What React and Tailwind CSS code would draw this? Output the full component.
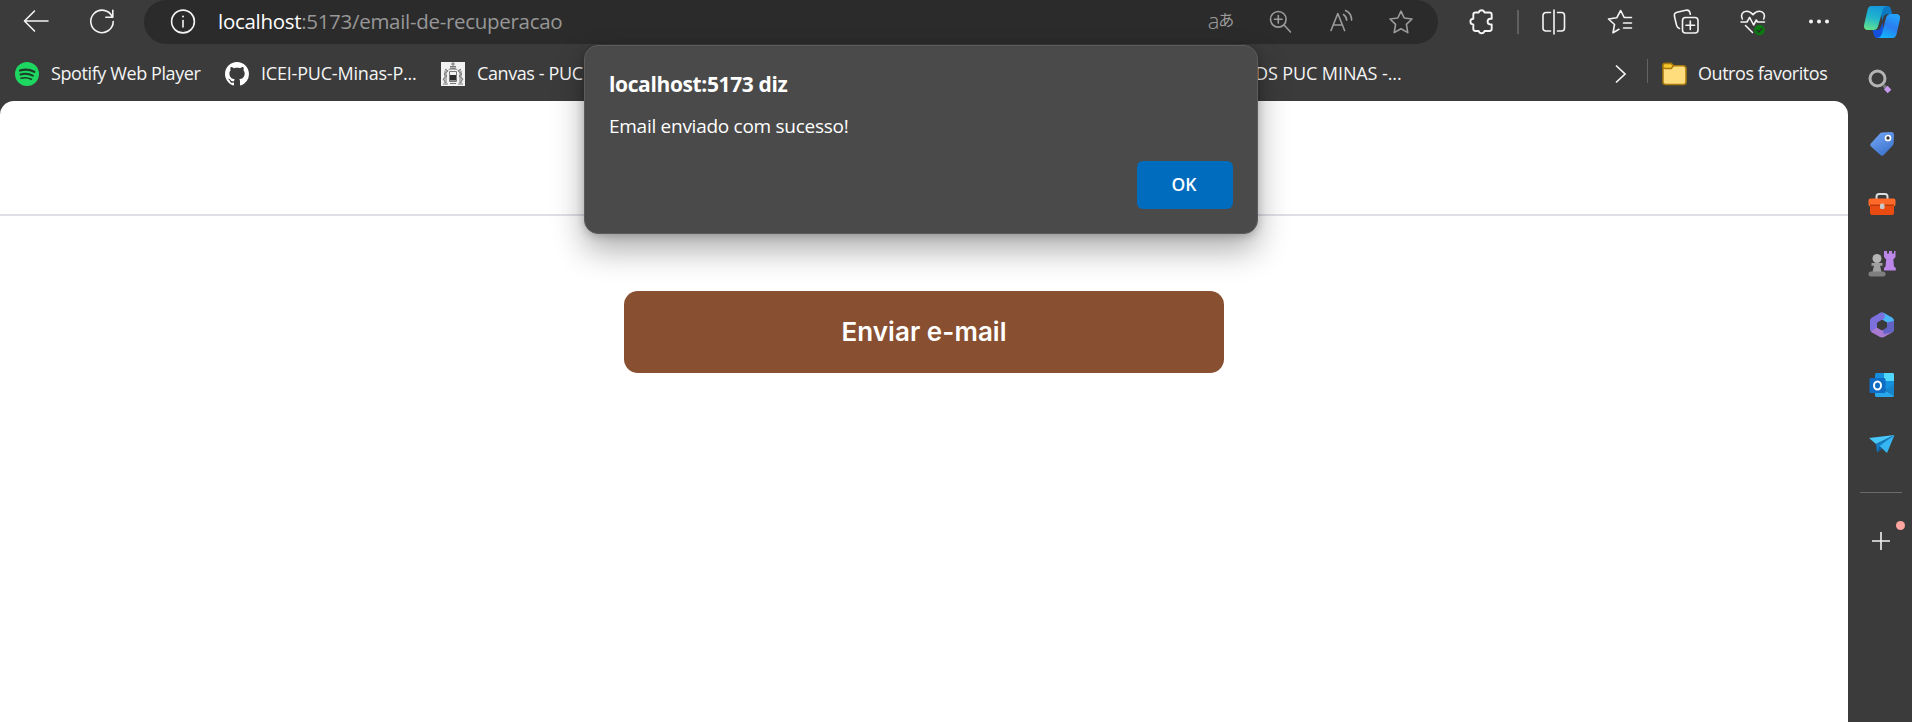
const SEGOE = "font-['Open_Sans','Noto_Sans',sans-serif]";

function Icon({ w = 28, h = 28, className = "", children }) {
  return (
    <svg
      width={w}
      height={h}
      viewBox={`0 0 ${w} ${h}`}
      fill="none"
      stroke="currentColor"
      strokeWidth="1.6"
      strokeLinecap="round"
      strokeLinejoin="round"
      className={`block shrink-0 ${className}`}
    >
      {children}
    </svg>
  );
}

const STAR = "M14 3.2 L17.2 10 L25 11 L19.4 16.4 L20.8 24.6 L14 20.8 L7.2 24.6 L8.6 16.4 L3 11 L10.8 10 Z";

function Toolbar() {
  return (
    <div className="flex h-11 items-center text-[#f4f4f4]">
      <Icon className="ml-[22px]">
        <path d="M26 13H3M12.5 3L2.500 13l10 10" />
      </Icon>
      <Icon className="ml-[38px]">
        <path d="M24.3 9A11.2 11.2 0 1 0 25.2 13.5M24.8 2.3v7h-7" />
      </Icon>
      <div className="ml-7 flex h-11 w-[1294px] shrink-0 items-center rounded-full bg-[#2b2b2b]">
        <Icon className="ml-[25px]">
          <circle cx="14" cy="13.5" r="11.4" />
          <path d="M14 12.5v6.5" />
          <circle cx="14" cy="8.6" r="1" fill="currentColor" stroke="none" />
        </Icon>
        <span className={`ml-[21px] w-[350px] whitespace-nowrap pb-px text-[20.5px] tracking-[-0.3px] text-[#979797] ${SEGOE}`}>
          <span className="text-white">localhost</span>:5173/email-de-recuperacao
        </span>
        <div className="ml-auto flex items-center pr-[23px] text-[#9b9b9b]">
          <span className="flex w-7 items-center justify-center whitespace-nowrap pb-1 font-['Open_Sans','Noto_Sans_CJK_JP',sans-serif] text-[22px] leading-none font-light">
            a<span className="-ml-px text-[16px] font-normal">あ</span>
          </span>
          <Icon className="ml-[31px]">
            <circle cx="12.3" cy="11.3" r="7.8" />
            <path d="M18 17l6.5 7M12.3 7.5v7.6M8.5 11.3h7.6" />
          </Icon>
          <Icon className="ml-[34px]">
            <path d="M3 22.5L9.8 5.5l6.8 17M5.4 17h8.8M15.5 6.5c2 1.3 3 3 3.2 5.8M17.6 2.5c4 1.8 6 5 6 9.6" />
          </Icon>
          <Icon className="ml-[31px]">
            <path d={STAR} />
          </Icon>
        </div>
      </div>
      <Icon className="ml-[30px]">
        <path d="M7.500 4.500h3.200a3 3 0 0 1 5.800 0h5a2.200 2.200 0 0 1 2.200 2.200v4h-1.200a2.900 2.900 0 0 0 0 5.800h1.200v4.300a2.200 2.200 0 0 1-2.200 2.200h-5a3 3 0 0 1-5.800 0H7.500a2.200 2.200 0 0 1-2.200-2.200v-4.300a2.900 2.900 0 0 1 0-5.800v-4a2.200 2.200 0 0 1 2.200-2.200z" strokeWidth="1.9" />
      </Icon>
      <div className="ml-[21px] h-6 w-0.5 bg-[#606060]" />
      <Icon className="ml-[21px]">
        <path d="M10.500 4.500H6a3 3 0 0 0-3 3V20a3 3 0 0 0 3 3h4.500M17.500 4.500h4a3 3 0 0 1 3 3V20a3 3 0 0 1-3 3h-4M14 2v24" />
      </Icon>
      <Icon className="ml-[38px]">
        <path d="M25.500 9.500h-7.300L14.700 2.500l-4 7.300-8.200 1.200 6 5.500L7 24.800l6-3.500M17.500 15h8M17.500 20h8" />
      </Icon>
      <Icon className="ml-[38px]">
        <rect x="10.500" y="9.500" width="15.500" height="15.500" rx="3" />
        <path d="M18.300 13v8.500M14 17.200h8.600M7.500 20.500c-2-.5-2.600-1.500-3-3.300L2.500 8.500C2 6.200 3 4.800 5 4.300l8.800-2.100c2.400-.5 3.700.6 4.200 2.600l.3 1.500" />
      </Icon>
      <Icon className="ml-[39px]">
        <path d="M3.300 11C1.200 7 3.500 3.300 7.600 3.300c3 0 4.800 1.500 6.400 3.400 1.600-1.900 3.400-3.400 6.400-3.400 4.100 0 6.400 3.700 4.300 7.700M2 14h6l2.600-4.600 4 7.600 2.700-5 1.200 2h7M6.500 17.500l7 7" />
        <circle cx="20.500" cy="22" r="5.300" fill="#0a7a10" stroke="none" />
        <path d="M18 22.200l1.800 1.800 3.300-3.600" strokeWidth="1.200" stroke="#2a2a2a" />
      </Icon>
      <Icon className="ml-[38px]">
        <g fill="currentColor" stroke="none">
          <circle cx="6" cy="13.500" r="2" />
          <circle cx="14" cy="13.500" r="2" />
          <circle cx="22" cy="13.500" r="2" />
        </g>
      </Icon>
    </div>
  );
}

function Crest() {
  return (
    <svg width="24" height="24" viewBox="0 0 24 24" className="block shrink-0">
      <rect width="24" height="24" fill="#f1f1f1" />
      <g fill="#b5b5b5">
        <path d="M3 9l3-2v14H3zM18 7l3 2v12h-3zM9 4h6v4H9z" />
      </g>
      <g fill="none" stroke="#777" strokeWidth="1">
        <path d="M12 0v4M10 2h4M9 4.500h6M7.500 8c2-2 7-2 9 0M4 7l3 2-4 3 3 2-4 3 3 4M20 7l-3 2 4 3-3 2 4 3-3 4M8.500 9.500h7v10h-7z" />
        <path d="M2 22h5M17 22h5M9 21.500h6" />
      </g>
      <path d="M9 13h6v5.500H9z" fill="#2c2c2c" />
    </svg>
  );
}

function Bookmarks() {
  return (
    <div className={`flex h-[57px] items-center whitespace-nowrap text-[18px] text-[#f5f5f5] ${SEGOE}`}>
      <div className="flex w-[210px] shrink-0 items-center gap-3 pl-[15px] pt-[3px]">
        <svg width="24" height="24" viewBox="0 0 24 24" className="block shrink-0">
          <circle cx="12" cy="12" r="12" fill="#1ed760" />
          <g fill="none" stroke="#1d3b28" strokeLinecap="round">
            <path d="M5 8.500c5-1.500 10-1 14.300 1.300" strokeWidth="2.300" />
            <path d="M5.500 12.500c4.300-1.200 8.500-.8 12.300 1.200" strokeWidth="2" />
            <path d="M6 16.200c3.700-.9 7.100-.6 10.300 1.100" strokeWidth="1.600" />
          </g>
        </svg>
        <span className="pb-px tracking-[-0.4px]">Spotify Web Player</span>
      </div>
      <div className="flex w-[216px] shrink-0 items-center gap-3 pl-[15px] pt-[3px]">
        <svg width="24" height="24" viewBox="0 0 16 16" fill="#fff" className="block shrink-0">
          <path d="M8 0C3.580 0 0 3.580 0 8c0 3.540 2.290 6.530 5.470 7.590.4.070.55-.17.55-.38 0-.19-.01-.82-.01-1.490-2.010.37-2.530-.49-2.690-.94-.09-.23-.48-.94-.82-1.130-.28-.15-.68-.52-.01-.53.63-.01 1.080.58 1.230.82.72 1.210 1.870.87 2.330.66.070-.52.28-.87.51-1.070-1.780-.2-3.640-.89-3.640-3.950 0-.87.31-1.590.82-2.150-.08-.2-.36-1.020.08-2.120 0 0 .67-.21 2.200.82.64-.18 1.320-.27 2-.27s1.360.09 2 .27c1.530-1.040 2.200-.82 2.200-.82.44 1.100.16 1.920.08 2.120.51.56.82 1.270.82 2.150 0 3.070-1.870 3.750-3.650 3.950.29.25.54.73.54 1.480 0 1.070-.01 1.930-.01 2.200 0 .21.15.46.55.38A8.010 8.010 0 0 0 16 8c0-4.420-3.580-8-8-8z" />
        </svg>
        <span className="pb-px tracking-[-0.2px]">ICEI-PUC-Minas-P...</span>
      </div>
      <div className="flex w-[158px] shrink-0 items-center gap-3 pl-[15px] pt-[3px]">
        <Crest />
        <span className="pb-px tracking-[-0.4px]">Canvas - PUC</span>
      </div>
      <span className="ml-[671px] w-[150px] shrink-0 pt-0.5 tracking-[-0.1px]">DS PUC MINAS -...</span>
      <div className="ml-auto mr-[86px] flex items-center pt-[3px]">
        <svg width="14" height="22" viewBox="0 0 14 22" fill="none" stroke="currentColor" strokeWidth="1.700" className="mr-[18px] block">
          <path d="M1 2.500l9 8.500-9 8.500" />
        </svg>
        <div className="mb-1.5 h-6 w-px bg-[#636363]" />
        <svg width="26" height="24" viewBox="0 0 26 24" className="ml-[13px] block" strokeWidth="1.500" stroke="#a7790d">
          <path d="M2 3.500C2 2.300 2.800 1.500 4 1.500h6l2.500 2.200H22c1.800 0 3 1 3 2.800V20c0 1.500-1 2.500-2.500 2.500h-18C3 22.500 2 21.500 2 20z" fill="#ffdc7c" />
          <path d="M2 3.500C2 2.300 2.800 1.500 4 1.500h6l2.500 2.200-2.200 2.800H4.500C3 6.500 2 6 2 5z" fill="#f7c52c" />
        </svg>
        <span className="ml-[11px] w-[128px] pb-px tracking-[-0.45px]">Outros favoritos</span>
      </div>
    </div>
  );
}

function Copilot() {
  return (
    <svg width="38" height="34" viewBox="0 0 38 34" className="block">
      <defs>
        <linearGradient id="cpA" x1="0.600" y1="0" x2="0.300" y2="1">
          <stop offset="0" stopColor="#1497dc" />
          <stop offset="0.500" stopColor="#20b5cc" />
          <stop offset="1" stopColor="#62e28c" />
        </linearGradient>
        <linearGradient id="cpB" x1="0.700" y1="0" x2="0.300" y2="1">
          <stop offset="0" stopColor="#22a4fb" />
          <stop offset="0.500" stopColor="#2b7df0" />
          <stop offset="1" stopColor="#12b4fa" />
        </linearGradient>
      </defs>
      <path d="M17 1h7c2.800 0 3.600 1.600 4.200 4l1 4h-4c-3 0-4.200 1.500-5 4l-1 3z" fill="#0b78c4" />
      <path d="M21 33h-6.500c-2.800 0-3.400-2-4-4.500l-1-3.500H14c2.500 0 3.500-1.500 4.200-4l1.500-4z" fill="#1550dc" />
      <path d="M8.500 1H24c-3 .5-4 2.500-4.800 5.500L15.500 20c-.9 3.300-2 5-5 5H5c-3.500 0-4.500-2.500-3.800-5.500L4.300 5.800C5 2.800 6 1 8.500 1z" fill="url(#cpA)" />
      <path d="M29.500 33H14.500c3-.5 4-2.500 4.800-5.500L22.700 14c.9-3.300 2.200-5 5-5h5.500c3.500 0 4.400 2.500 3.700 5.500l-3.100 13.700c-.7 3-1.800 4.800-4.300 4.800z" fill="url(#cpB)" />
    </svg>
  );
}

function SidebarIcons() {
  return (
    <>
      <svg width="28" height="28" viewBox="0 0 28 28" className="mt-[29px] ml-0.5 block">
        <path d="M16.500 17.500l3 2.500" stroke="#777" strokeWidth="3" />
        <path d="M18.800 19.500l3.700 4" stroke="#c698ee" strokeWidth="5" />
        <circle cx="10.500" cy="10.500" r="7.500" fill="#3b3b3b" stroke="#b4b4b4" strokeWidth="3" />
      </svg>
      <svg width="28" height="28" viewBox="0 0 28 28" className="mt-[34px] ml-[3px] block">
        <defs>
          <linearGradient id="tag" x1="0" y1="0" x2="0.600" y2="1">
            <stop offset="0" stopColor="#78aafa" />
            <stop offset="1" stopColor="#3d75cd" />
          </linearGradient>
        </defs>
        <path d="M14 2.500l9-.5c2 0 3 1 3 3l-.3 8c0 1-.4 1.700-1 2.400l-9 9.600c-1 1-2.300 1-3.300 0L3 16.500c-1-1-1-2.300 0-3.300L12 3.500c.6-.6 1.200-1 2-1z" fill="url(#tag)" />
        <circle cx="20" cy="8" r="2.500" fill="#333" stroke="#fff" strokeWidth="1.700" />
      </svg>
      <svg width="30" height="26" viewBox="0 0 30 26" className="mt-[34px] ml-[3px] block">
        <path d="M9.500 7V4.500c0-2 1-2.500 2.500-2.500h6c1.500 0 2.500.5 2.500 2.500V7" fill="none" stroke="#ddd" strokeWidth="2" />
        <rect x="1.500" y="6.500" width="27" height="8" rx="2" fill="#ff6a2a" />
        <path d="M3 13h24v8a2 2 0 0 1-2 2H5a2 2 0 0 1-2-2z" fill="#e94b11" />
        <path d="M3 12.500h24V14H3z" fill="#b93a0b" />
        <rect x="13" y="11.500" width="4.500" height="5.500" rx="1.500" fill="#c9c9c9" />
      </svg>
      <svg width="30" height="30" viewBox="0 0 30 30" className="mt-[31px] ml-[3px] block">
        <path d="M17 2h3v2.500h2V2h3v2.500h2V2h1.500v6l-2.200 2.500.7 7 1.800 1.500v2.500H17V19l1.500-1.500.7-7L17 8z" fill="#bd86e9" />
        <circle cx="10" cy="9.500" r="4.500" fill="#b5b5b5" />
        <path d="M4.500 14h11v2.800h-11zM7 16.500h6l1.500 6.500h-9z" fill="#a0a0a0" />
        <rect x="1.500" y="22.500" width="17" height="5" rx="2.300" fill="#7e7e7e" />
      </svg>
      <svg width="28" height="28" viewBox="0 0 28 28" className="mt-[32px] ml-[3px] block">
        <path d="M11.500 2.200c1.600-1 3.400-1 5 0L24 6.500c1.400.8 2 2 2 3.500v8l-7-4v-2.500L9 6z" fill="#4bb4f4" />
        <path d="M14 1.500c-1 0-1.800.2-2.500.7L4 6.500C2.600 7.300 2 8.500 2 10v8c0 1.500.7 2.700 2 3.500l5 1V12l6-3.500c2.800-2 2.500-6-1-7z" fill="#7b70dc" />
        <path d="M3 20.500l1 1 7.500 4.300c1.600 1 3.400 1 5 0L24 21.500c1.400-.8 2-2 2-3.500v-3l-6.500-1.500v2L14 19l-5-2.500z" fill="#a97ad2" />
        <path d="M26 18v-8l-7 1.500V16l-4.500 3 1.500 4 8-1.500c1.400-.8 2-2 2-3.500z" fill="#6263c4" />
        <path d="M14 8.800l4.700 2.700v5.200L14 19.400l-4.700-2.700v-5.200z" fill="#3b3b3b" />
      </svg>
      <svg width="28" height="28" viewBox="0 0 28 28" className="mt-[32px] ml-[3px] block">
        <rect x="7" y="2" width="19" height="16" rx="1.500" fill="#1490df" />
        <path d="M16 2h8.500A1.500 1.500 0 0 1 26 3.500V10H16z" fill="#50d9ff" />
        <path d="M7 12h9v6H7z" fill="#0a5fab" />
        <path d="M7 14l19 10.500a1.500 1.500 0 0 1-1.500 1.500h-16A1.500 1.500 0 0 1 7 24.500z" fill="#28a8ea" />
        <path d="M26 13v12L16.500 19z" fill="#1686cc" />
        <rect x="1.500" y="7" width="16" height="15" rx="1.500" fill="#0f6cc4" />
        <ellipse cx="9.500" cy="14.500" rx="3.500" ry="4" fill="none" stroke="#fff" strokeWidth="2" />
      </svg>
      <svg width="28" height="24" viewBox="0 0 28 24" className="mt-[34px] ml-[3px] block">
        <path d="M1 5L26.500 2 8 11z" fill="#48c8fa" />
        <path d="M8 11L26.500 2 9 19.500z" fill="#137cc2" />
        <path d="M11.500 13L26.500 2 19 20z" fill="#35b6f2" />
        <path d="M11.500 13L9 19.500l5.500-4z" fill="#0f639f" />
      </svg>
    </>
  );
}

function Sidebar() {
  return (
    <aside className="flex h-[722px] w-16 shrink-0 flex-col items-center bg-[#3b3b3b] pt-[5px]">
      <div className="ml-[3px]"><Copilot /></div>
      <SidebarIcons />
      <div className="mt-[35px] ml-0.5 h-px w-[42px] bg-[#6b6b6b]" />
      <div className="relative mt-[39px] ml-0.5">
        <svg width="18" height="18" viewBox="0 0 18 18" stroke="#f2f2f2" strokeWidth="1.600" className="block">
          <path d="M9 0v18M0 9h18" />
        </svg>
        <span className="absolute -top-[11px] left-6 size-[9px] rounded-full bg-[#ffa5a0]" />
      </div>
    </aside>
  );
}

function Dialog() {
  return (
    <div className={`absolute top-[45px] left-[584px] flex h-[189px] w-[674px] flex-col rounded-[14px] border border-[#5c5c5c] bg-[#4a4a4a] px-6 text-white shadow-[0_16px_32px_rgba(0,0,0,0.32),0_2px_8px_rgba(0,0,0,0.2)] ${SEGOE}`}>
      <h1 className="mt-[24px] text-[21px] leading-7 font-bold tracking-[-0.37px]">localhost:5173 diz</h1>
      <p className="mt-[14px] text-[19px] leading-7 tracking-[-0.27px]">Email enviado com sucesso!</p>
      <button className="mt-auto mb-[24px] h-12 w-24 self-end rounded-md bg-[#006cbe] pr-0.5 pb-px text-[17.5px] font-semibold">OK</button>
    </div>
  );
}

export default function App() {
  return (
    <div className="relative flex h-[722px] w-[1912px] overflow-hidden bg-[#3b3b3b]">
      <div className="flex w-[1848px] shrink-0 flex-col">
        <Toolbar />
        <div className="-mr-16"><Bookmarks /></div>
        <main className="flex flex-1 flex-col items-center rounded-t-[14px] bg-white">
          <header className="h-[115px] w-full border-b-2 border-[#dfdfe6]" />
          <button className="mt-[75px] h-[82px] w-[600px] rounded-[14px] bg-[#884f30] pb-px font-[Inter,sans-serif] text-[26px] font-semibold tracking-[0.05px] text-white">
            Enviar e-mail
          </button>
        </main>
      </div>
      <Sidebar />
      <Dialog />
    </div>
  );
}
